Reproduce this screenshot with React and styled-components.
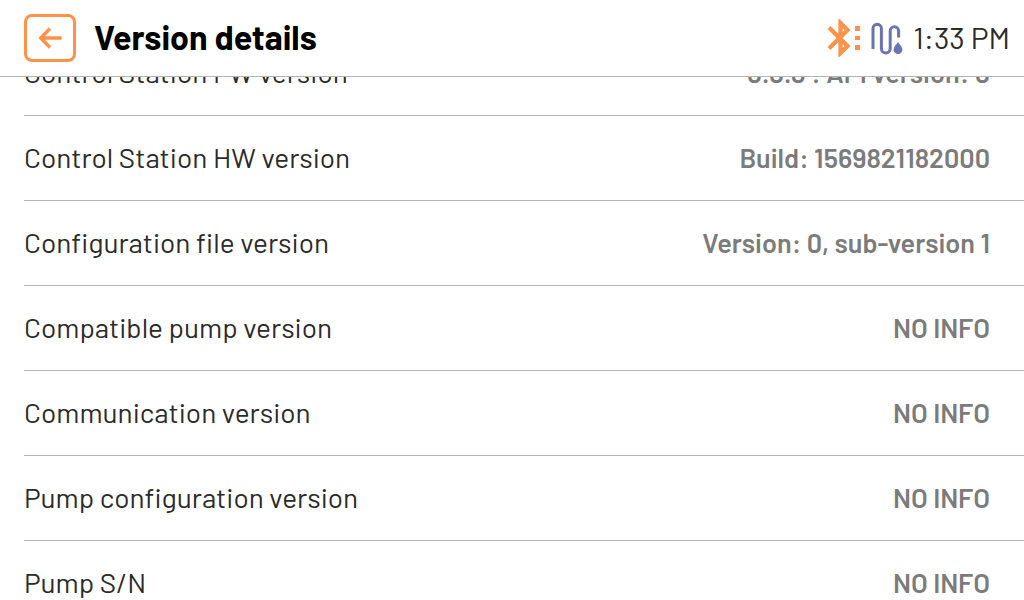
import React, { useLayoutEffect, useRef } from "react";
import styled, { createGlobalStyle } from "styled-components";

const GlobalStyle = createGlobalStyle`
  * { box-sizing: border-box; }
  body {
    margin: 0;
    background: #fff;
    color: #2b2b2b;
    font-family: Barlow, Roboto, "Liberation Sans", sans-serif;
  }
`;

const Screen = styled.div`
  display: flex;
  flex-direction: column;
  height: 100vh;
`;

const Header = styled.header`
  display: flex;
  flex: none;
  align-items: center;
  gap: 18px;
  padding: 14px 14px 14px 24px;
  border-bottom: 1px solid #b4b4b4;
`;

const BackButton = styled.button`
  display: grid;
  place-items: center;
  width: 52px;
  height: 48px;
  padding: 0;
  border: 3px solid #ff9149;
  border-radius: 8px;
  background: #fff;
  color: #ff9149;
  cursor: pointer;
`;

const Title = styled.h1`
  flex: 1;
  margin: 0;
  padding-bottom: 2px;
  color: #000;
  font-size: 34px;
  font-weight: 700;
  line-height: 38px;
`;

const Status = styled.div`
  display: flex;
  align-items: center;
  gap: 10px;
`;

const Clock = styled.time`
  padding-bottom: 2px;
  font-size: 30px;
  line-height: 38px;
`;

const List = styled.dl`
  flex: 1;
  min-height: 0;
  margin: 0;
  padding-left: 24px;
  overflow-y: auto;
  scrollbar-width: none;
`;

const Row = styled.div`
  display: flex;
  align-items: center;
  justify-content: space-between;
  height: 85px;
  padding: 0 34px 2px 0;
  border-bottom: 1px solid #b4b4b4;
  line-height: 32px;
`;

const Label = styled.dt`
  font-size: 28px;
  font-weight: 400;
`;

const Value = styled.dd`
  margin: 0;
  color: #7b7b7b;
  font-size: 27px;
  font-weight: 600;
`;

const rows = [
  ["Control Station FW version", "0.0.0 : API version: 0"],
  ["Control Station HW version", "Build: 1569821182000"],
  ["Configuration file version", "Version: 0, sub-version 1"],
  ["Compatible pump version", "NO INFO"],
  ["Communication version", "NO INFO"],
  ["Pump configuration version", "NO INFO"],
  ["Pump S/N", "NO INFO"],
];

const BackArrow = () => (
  <svg width="26" height="24" viewBox="0 0 26 24" fill="none" stroke="currentColor" strokeWidth="3.400" aria-hidden="true">
    <path d="M24.500 12H4M13 2.500L3.700 12L13 21.500" />
  </svg>
);

const BluetoothIcon = () => (
  <svg width="34" height="38" viewBox="0 0 34 38" role="img" aria-label="Bluetooth">
    <path d="M2 8.500L20.500 27L13.500 34V4L20.500 11L2 29.500" fill="none" stroke="#ff9149" strokeWidth="4.200" />
    <path d="M28 7h5v5h-5zM28 17h5v4h-5zM28 26h5v5h-5z" fill="#ff9149" />
  </svg>
);

const TubeIcon = () => (
  <svg width="32" height="34" viewBox="0 0 32 34" role="img" aria-label="Infusion line">
    <path
      d="M2 28V7.500a4.200 4.200 0 0 1 8.400 0V27.500a4.400 4.400 0 0 0 8.800 0V10a4.200 4.200 0 0 1 8.400 0V16.500"
      fill="none"
      stroke="#6b73b6"
      strokeWidth="3"
    />
    <path d="M27 21c1.800 2.800 4.400 5 4.400 7.600a4.400 4.400 0 0 1-8.800 0c0-2.600 2.600-4.800 4.400-7.600z" fill="#6b73b6" />
  </svg>
);

export default function App() {
  const list = useRef(null);

  useLayoutEffect(() => {
    list.current.scrollTop = 46;
  }, []);

  return (
    <Screen>
      <GlobalStyle />
      <Header>
        <BackButton type="button" aria-label="Back">
          <BackArrow />
        </BackButton>
        <Title>Version details</Title>
        <Status>
          <BluetoothIcon />
          <TubeIcon />
          <Clock dateTime="13:33">1:33 PM</Clock>
        </Status>
      </Header>
      <List ref={list}>
        {rows.map(([label, value]) => (
          <Row key={label}>
            <Label>{label}</Label>
            <Value>{value}</Value>
          </Row>
        ))}
      </List>
    </Screen>
  );
}
